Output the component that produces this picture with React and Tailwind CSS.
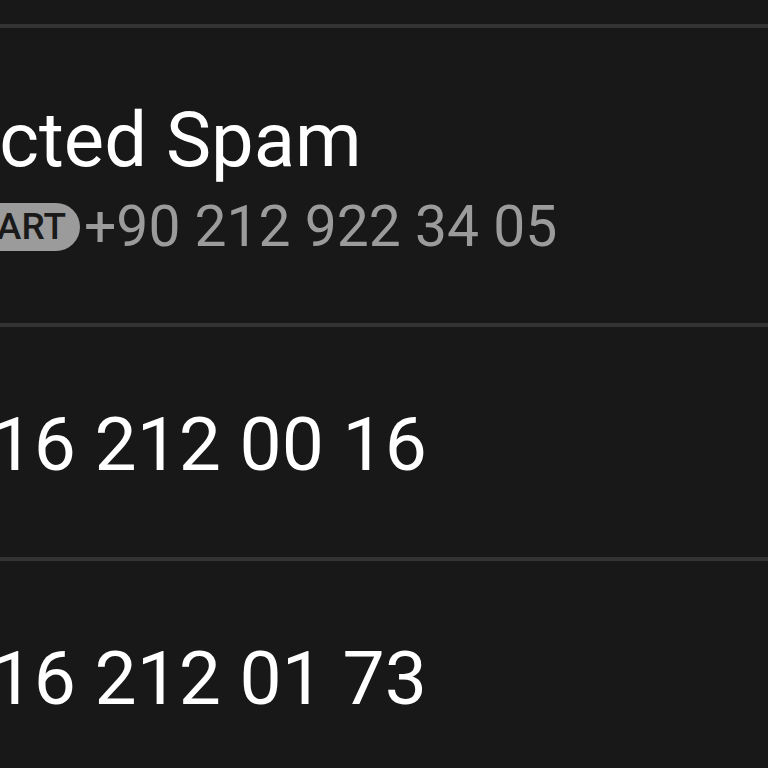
import React from "react";

const font = { fontFamily: "Roboto, 'Noto Sans', sans-serif" };

export default function App() {
  return (
    <div
      className="w-[768px] h-[768px] overflow-hidden bg-[#181818] flex flex-col"
      style={font}
    >
      <div className="h-[24px] shrink-0" />
      <div className="h-[4px] shrink-0 bg-[#333333]" />
      <div className="h-[295px] shrink-0 flex flex-col justify-center ml-[-210px]">
        <div className="text-[76px] leading-none text-white mt-[6px]">
          Suspected Spam
        </div>
        <div className="flex items-center gap-[4px] mt-[20px] ml-[140px]">
          <span className="rounded-full bg-[#9b9b9b] text-[#1a1a1a] text-[37px] font-medium leading-none h-[48px] w-[150px] pr-[14px] flex items-center justify-end shrink-0">
            SMART
          </span>
          <span className="text-[57px] leading-none text-[#9b9b9b] whitespace-nowrap">
            +90 212 922 34 05
          </span>
        </div>
      </div>
      <div className="h-[4px] shrink-0 bg-[#333333]" />
      <div className="h-[230px] shrink-0 flex items-center ml-[-196px] pt-[4px]">
        <div className="text-[75px] leading-none text-white whitespace-nowrap">+90 216 212 00 16</div>
      </div>
      <div className="h-[4px] shrink-0 bg-[#333333]" />
      <div className="h-[230px] shrink-0 flex items-center ml-[-196px] pt-[4px]">
        <div className="text-[75px] leading-none text-white whitespace-nowrap">+90 216 212 01 73</div>
      </div>
    </div>
  );
}
